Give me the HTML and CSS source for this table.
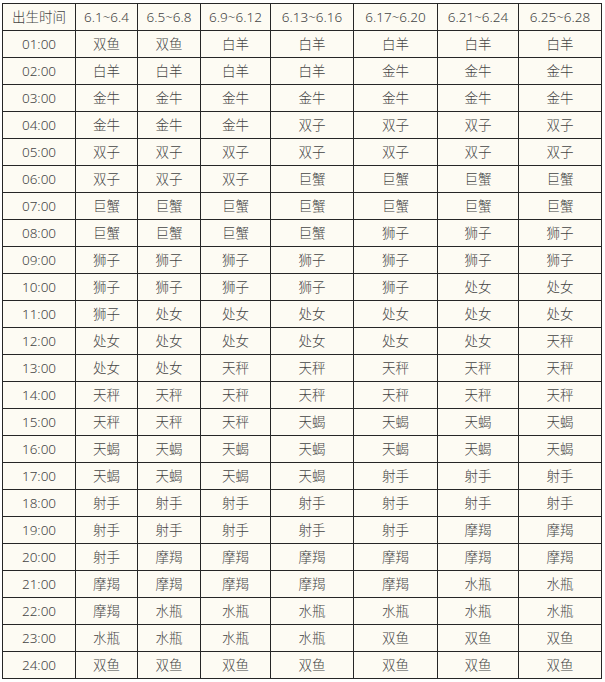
FILE: index.html
```html
<!DOCTYPE html>
<html lang="zh">
<head>
<meta charset="utf-8">
<title>出生时间星座表</title>
<link rel="stylesheet" href="styles.css">
</head>
<body>
<div class="wrap">
<table class="zodiac">
<colgroup>
<col class="c0"><col class="c1"><col class="c2"><col class="c3"><col class="c4"><col class="c5"><col class="c6"><col class="c7">
</colgroup>
<tbody>
<tr><td>出生时间</td><td>6.1~6.4</td><td>6.5~6.8</td><td>6.9~6.12</td><td>6.13~6.16</td><td>6.17~6.20</td><td>6.21~6.24</td><td>6.25~6.28</td></tr>
<tr><td>01:00</td><td>双鱼</td><td>双鱼</td><td>白羊</td><td>白羊</td><td>白羊</td><td>白羊</td><td>白羊</td></tr>
<tr><td>02:00</td><td>白羊</td><td>白羊</td><td>白羊</td><td>白羊</td><td>金牛</td><td>金牛</td><td>金牛</td></tr>
<tr><td>03:00</td><td>金牛</td><td>金牛</td><td>金牛</td><td>金牛</td><td>金牛</td><td>金牛</td><td>金牛</td></tr>
<tr><td>04:00</td><td>金牛</td><td>金牛</td><td>金牛</td><td>双子</td><td>双子</td><td>双子</td><td>双子</td></tr>
<tr><td>05:00</td><td>双子</td><td>双子</td><td>双子</td><td>双子</td><td>双子</td><td>双子</td><td>双子</td></tr>
<tr><td>06:00</td><td>双子</td><td>双子</td><td>双子</td><td>巨蟹</td><td>巨蟹</td><td>巨蟹</td><td>巨蟹</td></tr>
<tr><td>07:00</td><td>巨蟹</td><td>巨蟹</td><td>巨蟹</td><td>巨蟹</td><td>巨蟹</td><td>巨蟹</td><td>巨蟹</td></tr>
<tr><td>08:00</td><td>巨蟹</td><td>巨蟹</td><td>巨蟹</td><td>巨蟹</td><td>狮子</td><td>狮子</td><td>狮子</td></tr>
<tr><td>09:00</td><td>狮子</td><td>狮子</td><td>狮子</td><td>狮子</td><td>狮子</td><td>狮子</td><td>狮子</td></tr>
<tr><td>10:00</td><td>狮子</td><td>狮子</td><td>狮子</td><td>狮子</td><td>狮子</td><td>处女</td><td>处女</td></tr>
<tr><td>11:00</td><td>狮子</td><td>处女</td><td>处女</td><td>处女</td><td>处女</td><td>处女</td><td>处女</td></tr>
<tr><td>12:00</td><td>处女</td><td>处女</td><td>处女</td><td>处女</td><td>处女</td><td>处女</td><td>天秤</td></tr>
<tr><td>13:00</td><td>处女</td><td>处女</td><td>天秤</td><td>天秤</td><td>天秤</td><td>天秤</td><td>天秤</td></tr>
<tr><td>14:00</td><td>天秤</td><td>天秤</td><td>天秤</td><td>天秤</td><td>天秤</td><td>天秤</td><td>天秤</td></tr>
<tr><td>15:00</td><td>天秤</td><td>天秤</td><td>天秤</td><td>天蝎</td><td>天蝎</td><td>天蝎</td><td>天蝎</td></tr>
<tr><td>16:00</td><td>天蝎</td><td>天蝎</td><td>天蝎</td><td>天蝎</td><td>天蝎</td><td>天蝎</td><td>天蝎</td></tr>
<tr><td>17:00</td><td>天蝎</td><td>天蝎</td><td>天蝎</td><td>天蝎</td><td>射手</td><td>射手</td><td>射手</td></tr>
<tr><td>18:00</td><td>射手</td><td>射手</td><td>射手</td><td>射手</td><td>射手</td><td>射手</td><td>射手</td></tr>
<tr><td>19:00</td><td>射手</td><td>射手</td><td>射手</td><td>射手</td><td>射手</td><td>摩羯</td><td>摩羯</td></tr>
<tr><td>20:00</td><td>射手</td><td>摩羯</td><td>摩羯</td><td>摩羯</td><td>摩羯</td><td>摩羯</td><td>摩羯</td></tr>
<tr><td>21:00</td><td>摩羯</td><td>摩羯</td><td>摩羯</td><td>摩羯</td><td>摩羯</td><td>水瓶</td><td>水瓶</td></tr>
<tr><td>22:00</td><td>摩羯</td><td>水瓶</td><td>水瓶</td><td>水瓶</td><td>水瓶</td><td>水瓶</td><td>水瓶</td></tr>
<tr><td>23:00</td><td>水瓶</td><td>水瓶</td><td>水瓶</td><td>水瓶</td><td>双鱼</td><td>双鱼</td><td>双鱼</td></tr>
<tr><td>24:00</td><td>双鱼</td><td>双鱼</td><td>双鱼</td><td>双鱼</td><td>双鱼</td><td>双鱼</td><td>双鱼</td></tr>
</tbody>
</table>
</div>
</body>
</html>
```
FILE: styles.css
```css
html, body {
  margin: 0;
  padding: 0;
  background: #ffffff;
}
.wrap {
  padding: 3px 0 0 2px;
}
.zodiac {
  border-collapse: collapse;
  table-layout: fixed;
  width: 600px;
  background: #fdfbf3;
  font-family: "Noto Sans", "Noto Sans CJK SC", sans-serif;
  font-size: 13.5px;
  font-weight: 300;
  color: #444444;
}
.zodiac td {
  border: 1px solid #262626;
  height: 26px;
  padding: 0;
  text-align: center;
  vertical-align: middle;
  line-height: 16px;
}
.c0 { width: 73px; }
.c1 { width: 62px; }
.c2 { width: 63px; }
.c3 { width: 70px; }
.c4 { width: 83px; }
.c5 { width: 84px; }
.c6 { width: 81px; }
.c7 { width: 83px; }
```
